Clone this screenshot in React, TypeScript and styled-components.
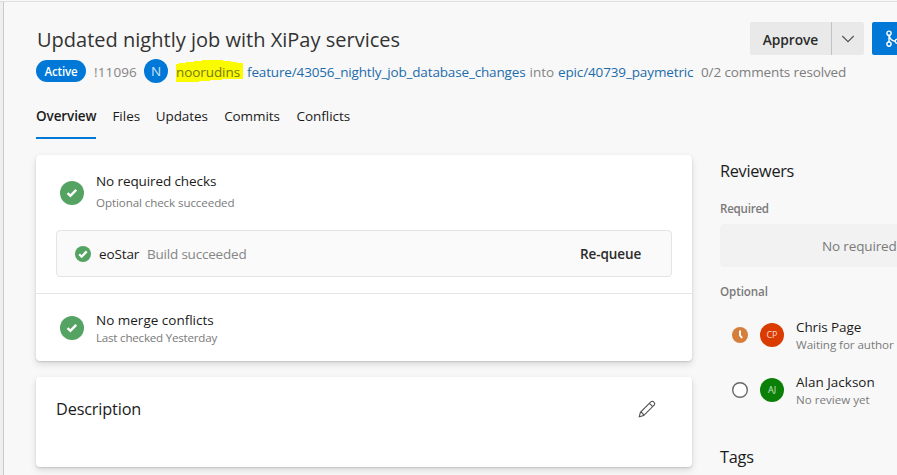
import React from 'react';
import styled, { createGlobalStyle } from 'styled-components';

const GlobalStyle = createGlobalStyle`
  * { box-sizing: border-box; }
  body { margin: 0; overflow: hidden; font-family: "Open Sans", "Noto Sans", sans-serif; background: #f8f8f8; }
`;

const Page = styled.div`
  display: flex;
  width: 897px;
  height: 475px;
  overflow: hidden;
  background: #f8f8f8;
`;

const Rail = styled.div`
  flex: none;
  width: 4px;
  margin-top: 1px;
  background: #efefef;
  border-top: 1px solid #dedede;
  border-right: 1px solid #cacaca;
`;

const Main = styled.main`
  flex: none;
  width: 893px;
  height: 474px;
  margin-top: 1px;
  border-top: 1px solid #e0e0e0;
  padding: 20px 0 0 32px;
  overflow: hidden;
`;

const Text = styled.span<{ $w?: number; $size?: number; $color?: string; $ls?: number; $bold?: boolean; $lh?: number; $mt?: number; $mb?: number; $ml?: number }>`
  display: block;
  flex: none;
  width: ${p => (p.$w ? `${p.$w}px` : 'auto')};
  margin: ${p => p.$mt ?? 0}px 0 ${p => p.$mb ?? 0}px ${p => p.$ml ?? 0}px;
  font-size: ${p => p.$size ?? 13.5}px;
  font-weight: ${p => (p.$bold ? 600 : 400)};
  color: ${p => p.$color ?? '#1b1b1b'};
  letter-spacing: ${p => p.$ls ?? 0}px;
  line-height: ${p => p.$lh ?? 20}px;
  white-space: nowrap;
`;

const TitleRow = styled.header`
  display: flex;
  align-items: center;
  height: 33px;
`;

const Title = styled.h1`
  flex: none;
  width: 714px;
  margin: 0;
  padding: 2px 0 0 1px;
  font-size: 20px;
  font-weight: 400;
  line-height: 28px;
  letter-spacing: 0.01px;
  color: #333;
  white-space: nowrap;
`;

const SplitButton = styled.div`
  display: flex;
  flex: none;
  width: 114px;
  height: 33px;
  margin-right: 8px;
  border-radius: 2px;
  background: #e9e9e9;
`;

const ApproveButton = styled.button`
  width: 82px;
  padding: 1px 0 0;
  border: 0;
  border-right: 1px solid #c2c2c2;
  background: none;
  font: 600 13.8px "Open Sans", sans-serif;
  letter-spacing: -0.1px;
  color: #2b2b2b;
`;

const MenuButton = styled.button`
  display: flex;
  flex: 1;
  align-items: center;
  justify-content: center;
  padding: 0;
  border: 0;
  background: none;
`;

const CompleteButton = styled.button`
  flex: none;
  width: 120px;
  height: 33px;
  padding: 0 0 0 13px;
  border: 0;
  border-radius: 2px;
  background: #0078d7;
  text-align: left;
  svg { display: block; }
`;

const MetaRow = styled.div`
  display: flex;
  align-items: center;
  height: 24px;
  margin-top: 4px;
`;

const Pill = styled.span`
  flex: none;
  width: 50px;
  height: 22px;
  margin-right: 8px;
  border-radius: 11px;
  background: #0078d7;
  color: #fff;
  font-size: 11.6px;
  font-weight: 600;
  line-height: 23px;
  letter-spacing: -0.15px;
  text-align: center;
`;

const Avatar = styled.span<{ $bg: string; $size?: number }>`
  flex: none;
  width: 24px;
  height: 24px;
  border-radius: 50%;
  background: ${p => p.$bg};
  color: rgba(255, 255, 255, 0.8);
  font-size: ${p => p.$size ?? 9}px;
  line-height: 24px;
  text-align: center;
`;

const Marked = styled.span`
  display: grid;
  flex: none;
  width: 67px;
  height: 24px;
  margin: 0 4px 0 8px;
  > * { grid-area: 1 / 1; align-self: center; }
  > span { z-index: 1; }
`;

const Tabs = styled.nav`
  display: flex;
  height: 39px;
  margin-top: 17px;
`;

const Tab = styled.a<{ $w: number; $active?: boolean; $ls?: number }>`
  flex: none;
  width: ${p => p.$w}px;
  height: 39px;
  margin-right: 16.4px;
  padding-top: 6px;
  border-bottom: 2px solid ${p => (p.$active ? '#0078d7' : 'transparent')};
  font-size: 13.5px;
  font-weight: ${p => (p.$active ? 600 : 400)};
  line-height: 20px;
  letter-spacing: ${p => p.$ls ?? 0}px;
  color: #1b1b1b;
  white-space: nowrap;
`;

const Body = styled.div`
  display: flex;
  align-items: flex-start;
  gap: 28px;
  margin-top: 16px;
`;

const Cards = styled.section`
  display: flex;
  flex: none;
  flex-direction: column;
  gap: 16px;
  width: 656px;
`;

const Card = styled.article<{ $h: number }>`
  height: ${p => p.$h}px;
  border-radius: 4px;
  background: #fff;
  box-shadow: 0 3px 7px rgba(0, 0, 0, 0.13), 0 1px 2px rgba(0, 0, 0, 0.13);
`;

const CheckRow = styled.div<{ $h: number }>`
  display: flex;
  align-items: center;
  gap: 12px;
  height: ${p => p.$h}px;
  padding-left: 24px;
`;

const Lines = styled.div<{ $gap?: number; $pt?: number; $pb?: number }>`
  display: flex;
  flex-direction: column;
  gap: ${p => p.$gap ?? 0}px;
  padding: ${p => p.$pt ?? 0}px 0 ${p => p.$pb ?? 0}px;
`;

const BuildBox = styled.div`
  display: flex;
  align-items: center;
  width: 616px;
  height: 47px;
  margin: 0 20px 16px;
  padding-left: 18px;
  border: 1px solid #e4e4e4;
  border-radius: 4px;
  background: #fafafa;
`;

const Divider = styled.div`
  height: 1px;
  background: #e6e6e6;
`;

const DescriptionRow = styled.div`
  display: flex;
  align-items: center;
  justify-content: space-between;
  padding: 20px 36px 0 20px;
`;

const Sidebar = styled.aside`
  flex: none;
  width: 280px;
  padding-top: 4px;
`;

const EmptyBox = styled.div`
  display: flex;
  align-items: center;
  height: 43px;
  margin: 7px 0 17px;
  padding: 1px 0 0 102px;
  border-radius: 4px;
  background: #f2f2f2;
`;

const Reviewer = styled.div`
  display: flex;
  align-items: center;
  gap: 12px;
  height: 55px;
  padding-left: 12px;
`;

const Icon = styled.svg`
  display: block;
  flex: none;
`;

const Success = ({ size }: { size: number }) => (
  <Icon width={size} height={size} viewBox="0 0 24 24">
    <circle cx="12" cy="12" r="12" fill="#55a362" />
    <path d={size > 20 ? 'M7.6 12.2l2.8 2.7 5.8-6' : 'M6.3 12.4l3.7 3.7 7.6-8'} fill="none" stroke="#fff" strokeWidth={size > 20 ? 2.4 : 3.4} />
  </Icon>
);

const muted = '#7a7a7a';
const link = '#1c6cab';

export default function App() {
  return (
    <Page>
      <GlobalStyle />
      <Rail />
      <Main>
        <TitleRow>
          <Title>Updated nightly job with XiPay services</Title>
          <SplitButton>
            <ApproveButton>Approve</ApproveButton>
            <MenuButton aria-label="More votes">
              <Icon width="14" height="10" viewBox="0 0 14 10" fill="none" stroke="#505050" strokeWidth="1.1">
                <path d="M1.3 2l5.7 5.7L12.7 2" />
              </Icon>
            </MenuButton>
          </SplitButton>
          <CompleteButton aria-label="Complete">
            <Icon width="18" height="18" viewBox="0 0 18 18" fill="none" stroke="#fff" strokeWidth="1.4">
              <circle cx="4" cy="3.2" r="2.1" />
              <circle cx="4" cy="14.1" r="2.1" />
              <circle cx="12.4" cy="11.2" r="2.1" />
              <path d="M4 5.4v6.7M4.2 5.6c.6 3.2 2.8 5.2 6 5.6" />
            </Icon>
          </CompleteButton>
        </TitleRow>
        <MetaRow>
          <Pill>Active</Pill>
          <Text $w={50} $mt={2} $color="#858585" $ls={0.13}>!11096</Text>
          <Avatar $bg="#0078d7" $size={13.5}>N</Avatar>
          <Marked>
            <Icon width="67" height="24" viewBox="0 0 67 24">
              <path d="M0 5h3V4h7V3h8V2h8V1h21v1h8v1h6v1h6v16H46v1H34v1H23v1H0z" fill="#fbfb00" />
            </Icon>
            <Text $mt={2} $color="#77770e" $ls={-0.08}>noorudins</Text>
          </Marked>
          <Text $w={282.5} $mt={2} $color={link} $ls={-0.15}>feature/43056_nightly_job_database_changes</Text>
          <Text $w={28.5} $mt={2} $color="#858585">into</Text>
          <Text $w={143} $mt={2} $color={link} $ls={-0.13}>epic/40739_paymetric</Text>
          <Text $mt={2} $color="#7d7d7d" $ls={-0.12}>0/2 comments resolved</Text>
        </MetaRow>
        <Tabs>
          <Tab $w={60} $active $ls={-0.1}>Overview</Tab>
          <Tab $w={27}>Files</Tab>
          <Tab $w={52} $ls={-0.1}>Updates</Tab>
          <Tab $w={56} $ls={-0.1}>Commits</Tab>
          <Tab $w={53} $ls={-0.05}>Conflicts</Tab>
        </Tabs>
        <Body>
          <Cards>
            <Card $h={206}>
              <CheckRow $h={75}>
                <Success size={24} />
                <Lines $gap={3} $pb={2}>
                  <Text $ls={-0.1}>No required checks</Text>
                  <Text $size={11.6} $lh={18} $color={muted} $ls={-0.1}>Optional check succeeded</Text>
                </Lines>
              </CheckRow>
              <BuildBox>
                <Success size={16} />
                <Text $w={48} $ml={8} $ls={-0.12}>eoStar</Text>
                <Text $w={433} $color="#858585" $ls={-0.2}>Build succeeded</Text>
                <Text $bold $color="#2b2b2b" $ls={-0.08}>Re-queue</Text>
              </BuildBox>
              <Divider />
              <CheckRow $h={67}>
                <Success size={24} />
                <Lines $pt={2}>
                  <Text $lh={18}>No merge conflicts</Text>
                  <Text $size={11.6} $lh={17} $color={muted} $ls={-0.22}>Last checked Yesterday</Text>
                </Lines>
              </CheckRow>
            </Card>
            <Card $h={90}>
              <DescriptionRow>
                <Text $size={16.3} $lh={24} $ls={-0.16}>Description</Text>
                <Icon width="18" height="18" viewBox="0 0 18 18" fill="none" stroke="#505050" strokeWidth="1.1">
                  <path d="M1.3 16.7l1.1-4.4L12.8 1.9a2 2 0 0 1 2.9 0l.4.4a2 2 0 0 1 0 2.9L5.7 15.6zM2.4 12.3c1.6.2 2.9 1.6 3.3 3.3M11.4 3.3l3.3 3.3" />
                </Icon>
              </DescriptionRow>
            </Card>
          </Cards>
          <Sidebar>
            <Text $size={16.3} $lh={24} $ls={-0.3}>Reviewers</Text>
            <Text $size={11.6} $lh={16} $mt={18} $bold $color={muted} $ls={-0.25}>Required</Text>
            <EmptyBox>
              <Text $color={muted} $ls={-0.15}>No required</Text>
            </EmptyBox>
            <Text $size={11.6} $lh={16} $mb={7} $bold $color={muted} $ls={-0.1}>Optional</Text>
            <Reviewer>
              <Icon width="16" height="16" viewBox="0 0 16 16">
                <circle cx="8" cy="8" r="8" fill="#d67f3c" />
                <path d="M8 3.6v4.8l2.2 2.6" fill="none" stroke="#fff" strokeWidth="1.9" />
              </Icon>
              <Avatar $bg="#da3b01">CP</Avatar>
              <Lines $pt={2}>
                <Text $lh={18} $ls={-0.1}>Chris Page</Text>
                <Text $size={11.6} $lh={17} $color={muted} $ls={-0.06}>Waiting for author</Text>
              </Lines>
            </Reviewer>
            <Reviewer>
              <Icon width="16" height="16" viewBox="0 0 16 16">
                <circle cx="8" cy="8" r="7.3" fill="#fff" stroke="#666" strokeWidth="1.4" />
              </Icon>
              <Avatar $bg="#0b8008">AJ</Avatar>
              <Lines $pt={2}>
                <Text $lh={18}>Alan Jackson</Text>
                <Text $size={11.6} $lh={17} $color={muted}>No review yet</Text>
              </Lines>
            </Reviewer>
            <Text $size={16.3} $lh={24} $ls={-0.2} $mt={28}>Tags</Text>
          </Sidebar>
        </Body>
      </Main>
    </Page>
  );
}
